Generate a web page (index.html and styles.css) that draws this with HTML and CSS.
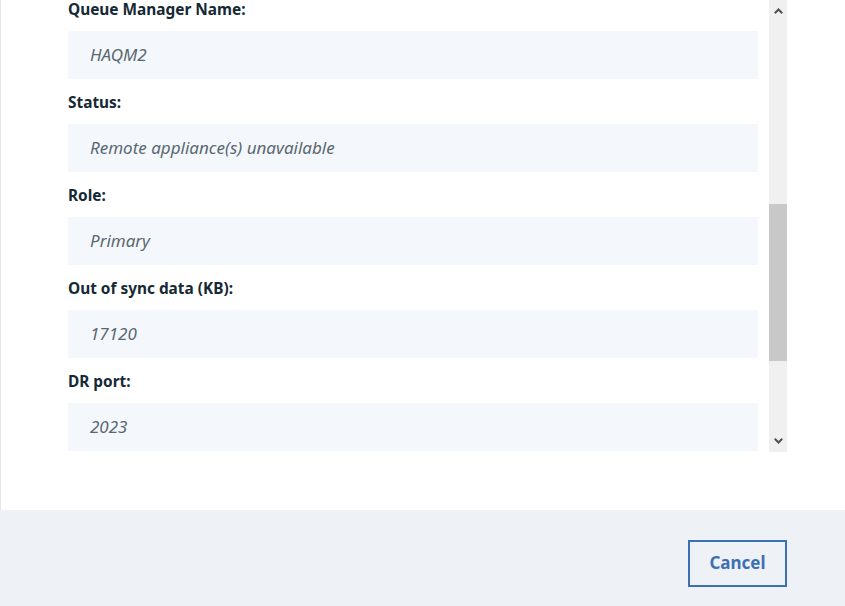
FILE: index.html
```html
<!DOCTYPE html>
<html>
<head>
<meta charset="utf-8">
<link rel="stylesheet" href="styles.css">
</head>
<body>
<div class="dialog">
  <div class="body">
    <div class="scroll">
      <div class="fields">
        <div class="label">Queue Manager Name:</div>
        <div class="value">HAQM2</div>
        <div class="label">Status:</div>
        <div class="value">Remote appliance(s) unavailable</div>
        <div class="label">Role:</div>
        <div class="value">Primary</div>
        <div class="label">Out of sync data (KB):</div>
        <div class="value">17120</div>
        <div class="label">DR port:</div>
        <div class="value">2023</div>
      </div>
      <div class="scrollbar">
        <div class="arrow">
          <svg width="9" height="6" viewBox="0 0 9 6"><path d="M0.8 5.2 L4.5 1.5 L8.2 5.2" fill="none" stroke="#505050" stroke-width="2"/></svg>
        </div>
        <div class="track"><div class="thumb"></div></div>
        <div class="arrow">
          <svg width="9" height="6" viewBox="0 0 9 6"><path d="M0.8 0.8 L4.5 4.5 L8.2 0.8" fill="none" stroke="#505050" stroke-width="2"/></svg>
        </div>
      </div>
    </div>
  </div>
  <div class="footer">
    <button class="btn">Cancel</button>
  </div>
</div>
</body>
</html>
```
FILE: styles.css
```css
html, body {
  margin: 0;
  padding: 0;
  background: #ffffff;
}
.dialog {
  width: 845px;
  height: 606px;
  display: flex;
  flex-direction: column;
  font-family: "Noto Sans", "Liberation Sans", sans-serif;
}
.body {
  height: 510px;
  border-left: 1px solid #e6e6e6;
  padding-left: 67px;
  box-sizing: border-box;
}
.scroll {
  display: flex;
  gap: 11px;
  align-items: flex-start;
}
.fields {
  width: 690px;
  display: flex;
  flex-direction: column;
}
.label {
  height: 19px;
  line-height: 20px;
  font-size: 15.4px;
  font-weight: 700;
  color: #152935;
  margin-bottom: 12px;
}
.value {
  height: 48px;
  line-height: 47px;
  background: #f4f7fb;
  padding-left: 22px;
  font-size: 17px;
  font-style: italic;
  color: #5a6872;
  margin-bottom: 14px;
}
.value:last-child {
  margin-bottom: 0;
}
.scrollbar {
  width: 18px;
  height: 452px;
  background: #f0f0f0;
  display: flex;
  flex-direction: column;
}
.arrow {
  height: 22px;
  display: flex;
  align-items: center;
  justify-content: center;
}
.track {
  flex: 1;
  display: flex;
  flex-direction: column;
  padding-top: 182px;
}
.thumb {
  height: 157px;
  background: #c8c8c8;
}
.footer {
  flex: 1;
  background: #eef1f5;
  display: flex;
  justify-content: flex-end;
  align-items: flex-start;
  padding: 30px 58px 0 0;
}
.btn {
  width: 99px;
  height: 47px;
  border: 2px solid #3d70b2;
  background: transparent;
  color: #3d70b2;
  font-family: "Noto Sans", "Liberation Sans", sans-serif;
  font-size: 17px;
  font-weight: 700;
  padding: 0 0 3px 0;
}
```
